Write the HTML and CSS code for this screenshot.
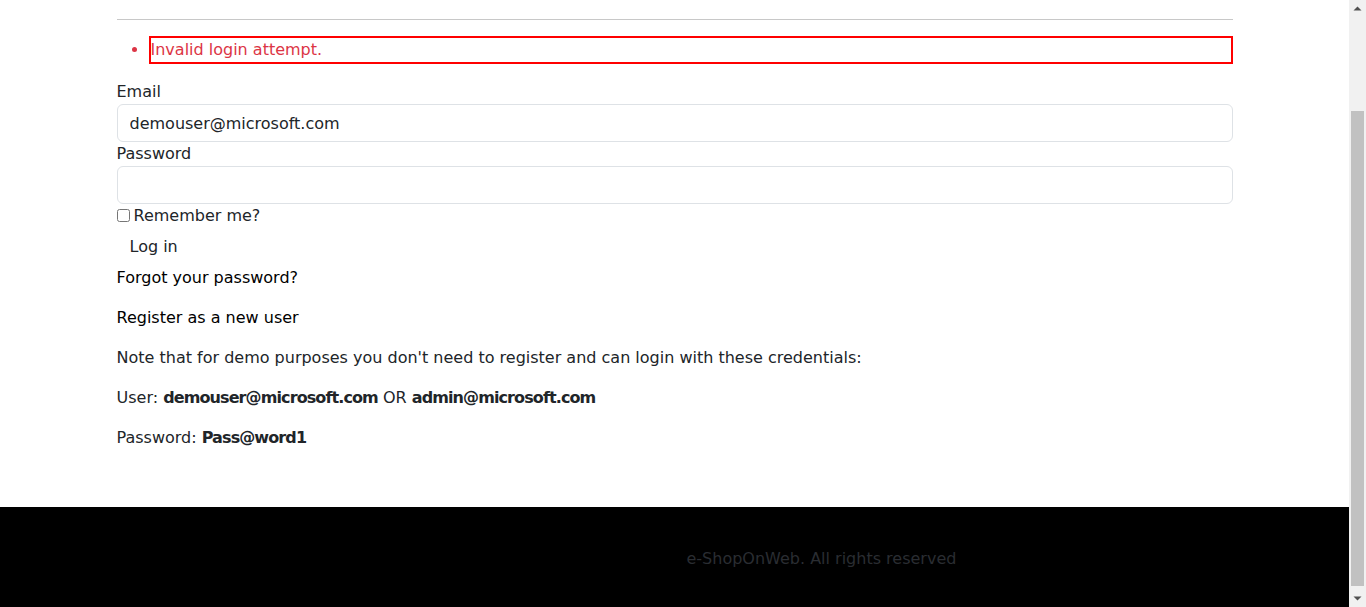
FILE: index.html
```html
<!DOCTYPE html>
<html lang="en">
<head>
<meta charset="utf-8">
<title>Log in - Microsoft.eShopOnWeb</title>
<link rel="stylesheet" href="styles.css">
</head>
<body>
<div class="app">
  <div class="page">
    <main class="main">
      <div class="container">
        <hr class="rule">
        <ul class="validation">
          <li class="validation-item">Invalid login attempt.</li>
        </ul>
        <form class="form">
          <label class="label" for="email">Email</label>
          <input class="input" id="email" type="text" value="demouser@microsoft.com">
          <label class="label" for="password">Password</label>
          <input class="input" id="password" type="password">
          <label class="check-row"><input class="check" type="checkbox"> Remember me?</label>
          <button class="btn" type="button">Log in</button>
        </form>
        <p class="para"><a class="link" href="#">Forgot your password?</a></p>
        <p class="para"><a class="link" href="#">Register as a new user</a></p>
        <p class="para">Note that for demo purposes you don't need to register and can login with these credentials:</p>
        <p class="para">User: <b class="strong">demouser@microsoft.com</b> OR <b class="strong">admin@microsoft.com</b></p>
        <p class="para">Password: <b class="strong">Pass@word1</b></p>
      </div>
    </main>
    <footer class="footer">
      <div class="container footer-row">
        <div class="footer-brand"></div>
        <div class="footer-text">e-ShopOnWeb. All rights reserved</div>
      </div>
    </footer>
  </div>
  <div class="scrollbar" aria-hidden="true">
    <div class="sb-btn"><svg width="9" height="5" viewBox="0 0 9 5"><path d="M0.5 4.5 L4.5 0.5 L8.5 4.5 Z" fill="#505050"/></svg></div>
    <div class="sb-track"><div class="sb-thumb"></div></div>
    <div class="sb-btn"><svg width="9" height="5" viewBox="0 0 9 5"><path d="M0.5 0.5 L4.5 4.5 L8.5 0.5 Z" fill="#505050"/></svg></div>
  </div>
</div>
</body>
</html>
```
FILE: styles.css
```css
* { box-sizing: border-box; }
html, body { margin: 0; height: 100%; overflow: hidden; }
body {
  font-family: "DejaVu Sans", "Open Sans", sans-serif;
  font-size: 16px;
  line-height: 24px;
  color: #212529;
  background: #fff;
}
.app { display: flex; height: 607px; }
.page { flex: 1; display: flex; flex-direction: column; min-width: 0; }
.main { flex: 1; padding-top: 3px; }
.container {
  width: 1140px;
  margin: 0 auto;
  padding: 0 12px;
}
.rule {
  margin: 16px 0;
  border: 0;
  border-top: 1px solid #c8c8c8;
  height: 0;
}
.validation {
  margin: 0 0 16px;
  padding-left: 32px;
  color: #dc3545;
}
.validation-item {
  border: 2px solid #ff0000;
  line-height: 24px;
}
.form { display: flex; flex-direction: column; align-items: flex-start; }
.label { display: block; }
.input {
  width: 100%;
  height: 38px;
  padding: 6px 12px;
  border: 1px solid #dee2e6;
  border-radius: 6px;
  font: inherit;
  color: #212529;
}
.check-row { display: flex; align-items: center; }
.check { margin: 0 4px 2px 0; width: 13px; height: 13px; }
.btn {
  font: inherit;
  color: #212529;
  background: transparent;
  border: 1px solid transparent;
  padding: 6px 12px;
  line-height: 24px;
}
.para { margin: 0 0 16px; }
.link { color: #000; text-decoration: none; }
.strong { font-weight: 700; letter-spacing: -0.9px; }
.footer { background: #000; height: 100px; flex: none; }
.footer-row {
  display: grid;
  grid-template-columns: 1fr 1fr;
  height: 100px;
  align-items: center;
  padding-top: 4px;
}
.footer-text { padding-left: 12px; color: #2a2d32; }
.scrollbar {
  width: 17px;
  flex: none;
  background: #f1f1f1;
  display: flex;
  flex-direction: column;
}
.sb-btn {
  height: 17px;
  display: flex;
  align-items: center;
  justify-content: center;
}
.sb-track { flex: 1; padding: 94px 2px 0; }
.sb-thumb { height: 475px; background: #c1c1c1; }
```
